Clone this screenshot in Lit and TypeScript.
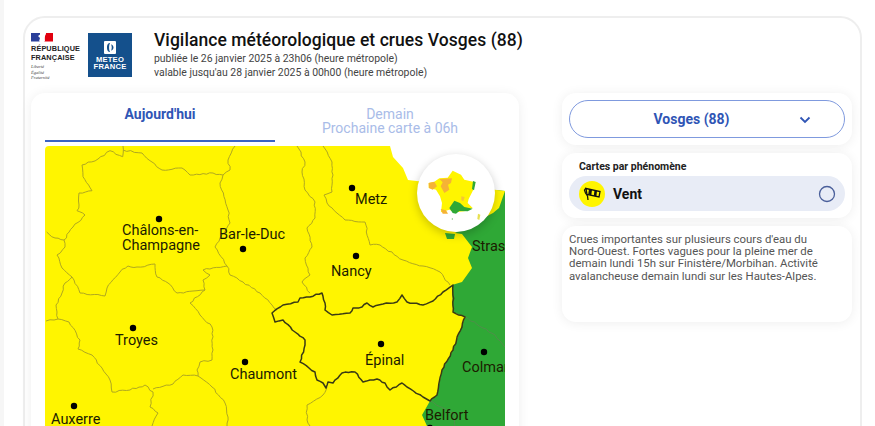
import { LitElement, html, css, svg } from "lit";
import { customElement } from "lit/decorators.js";

function jag(d: string, amp: number, seed: number) {
  let s = seed;
  const rnd = () => {
    s = (s * 1664525 + 1013904223) % 4294967296;
    return s / 4294967296 - 0.5;
  };
  const closed = /Z\s*$/.test(d);
  const pts = (d.match(/-?[\d.]+\s+-?[\d.]+/g) || []).map((p) => p.trim().split(/\s+/).map(Number));
  if (closed) pts.push(pts[0]);
  let out = `M${pts[0][0]} ${pts[0][1]}`;
  for (let i = 1; i < pts.length; i++) {
    const [x0, y0] = pts[i - 1];
    const [x1, y1] = pts[i];
    const len = Math.hypot(x1 - x0, y1 - y0);
    const n = Math.max(1, Math.round(len / 3.5));
    for (let k = 1; k <= n; k++) {
      const t = k / n;
      const off = k === n ? 0 : rnd() * amp * 2;
      const x = x0 + (x1 - x0) * t + (-(y1 - y0) / (len || 1)) * off;
      const y = y0 + (y1 - y0) * t + ((x1 - x0) / (len || 1)) * off;
      out += `L${x.toFixed(1)} ${y.toFixed(1)}`;
    }
  }
  return out + (closed ? "Z" : "");
}

const thin = [
  "M123 146L122.7 156.7L110 150.7L98 159L82 165L83 176.7L92 190.7L79 193L79 205L77 210.7L85 215L73 227L64 240L55 238L46.7 232",
  "M64 240L65 247L57 255L62 268L72 277L65 283L62 293L56 305L58 319L46 321",
  "M58 319L69 322L80 340L78 349L92 355L102 368L110 380L112 392L130 390L145 385L153 392L150 407L158 413L152 426",
  "M153 389L173 384L183 375L198 376L212 387L225 403L228 417L227 426",
  "M72 277L80 293L105 296L107 288L120 272L128 266L137 267L155 264L157 277L168 283L177 293L193 291L205 290L190 303L200 315L212 327L213 350L212 360L200 362L197 370L198 376",
  "M205 290L203 280L210 275L203 270L227 266L230 275L243 282L260 293L272 305L277 310",
  "M227 266L215 247L230 223L228 210L220 183L223 175L213 173L190 175L182 168L162 170L152 162L142 153L123 150",
  "M223 175L230 170L228 160L235 146",
  "M297 146L305 162L302 172L305 190L315 202L315 218L307 228L312 247L305 258L310 275L302 282L310 293",
  "M323 146L332 162L333 175L332 192L324 195L327 203L345 220L365 222L370 245L380 245L403 260L423 266L440 272L450 285",
  "M327 387L323 395L307 405L307 420L310 426",
];
const greenLines = ["M465 317L483 328L495 335L505 347", "M430 401L453 413L455 426"];
const vosges =
  "M272 313L283 305L298 302L300 298L310 297L322 293L325 303L325 310L332 315L350 313L353 308L362 307L367 303L373 307L383 304L397 302L402 295L407 302L423 305L433 301L443 292L453 285L453 312L465 317L453 350L442 370L437 395L430 401L423 397L407 387L402 383L390 390L385 383L377 379L363 382L355 372L342 373L333 383L328 382L326 388L323 383L317 380L315 372L300 362L305 345L305 340L295 332L283 320L275 322Z";
const yellow =
  "M49 146L390 146L393 157L403 168L408 180L425 182L497 190L505 191L499 208L493 213L470 225L455 233L462 234L472 247L468 258L472 268L462 282L452 285L453 312L465 317L453 350L442 370L437 395L430 401L422 415L427 426L45 426L45 150Q45 146 49 146Z";
const green = "M497 190L505 191L505 426L420 426L440 300L440 240Z";

const dots: [number, number][] = [
  [159, 219], [243, 249], [352, 188], [356, 256], [133, 328], [245, 362],
  [74, 406], [381, 344], [484, 352], [430, 428],
];
const labels: [string, number, number][] = [
  ["Châlons-en-", 122, 235], ["Champagne", 122, 250], ["Bar-le-Duc", 219, 239],
  ["Metz", 355, 204], ["Nancy", 331, 276], ["Troyes", 115, 345],
  ["Chaumont", 230, 379], ["Auxerre", 51, 424], ["Épinal", 365, 365],
  ["Colmar", 462, 372], ["Belfort", 425, 420], ["Strasbourg", 472, 251],
];

@customElement("app-root")
export class AppRoot extends LitElement {
  static styles = css`
    :host { display: block; width: 875px; height: 426px; overflow: hidden; box-sizing: border-box;
      background: #fff; border-left: 4px solid #f6f6f6; font-family: Roboto, sans-serif; padding: 16px 13px 0 19px; }
    .frame { height: 500px; box-sizing: border-box; border: 2px solid #eee; border-radius: 22px; padding: 15px 7px 0 6px; background: #fff; }
    header { display: flex; align-items: flex-start; height: 60px; }
    .rf { width: 57px; display: flex; flex-direction: column; }
    .flag { display: block; margin-bottom: 3px; }
    .rf b { font: 700 7.3px/8.6px "Liberation Sans", sans-serif; color: #222; letter-spacing: .12px; display: block; }
    .rf i { font: italic 4.500px/5.500px "Liberation Serif", serif; color: #444; display: block; margin-top: 2px; }
    .mf { width: 44px; height: 44px; background: #14508c; display: flex; flex-direction: column; align-items: center; color: #fff; font: 700 7.600px/6.500px "Liberation Sans", sans-serif; letter-spacing: .2px; text-align: center; }
    .mf svg { margin-top: 8px; margin-bottom: 3px; display: block; }
    .head { margin-left: 22px; margin-top: -5px; }
    h1 { margin: 0; font: 500 17.5px/24px Roboto, sans-serif; color: #111; letter-spacing: .06px; }
    .head p { margin: 0; font: 400 10.45px/14px Roboto, sans-serif; color: #444; }
    main { display: flex; gap: 43px; align-items: flex-start; }
    .panel { width: 488px; height: 400px; box-sizing: border-box; padding: 0 14px; background: #fff; border-radius: 14px; box-shadow: 0 1px 12px rgba(0,0,0,.07); }
    .tabs { display: grid; grid-template-columns: 230px 230px; height: 49px; margin-bottom: 4px; }
    .tab { text-align: center; font: 400 14px/14px Roboto, sans-serif; color: #a9bce8; padding-top: 14px; box-sizing: border-box; }
    .tab.on { font-weight: 700; color: #2f55b5; border-bottom: 2px solid #3a63c4; }
    .map { position: relative; width: 460px; height: 280px; }
    .map > svg { display: block; }
    .map text { font: 400 14.5px Roboto, sans-serif; fill: #1c1c00; }
    .mini { position: absolute; left: 372px; top: 8px; width: 78px; height: 78px; border-radius: 50%; background: #fff; box-shadow: 0 3px 10px rgba(0,0,0,.22); }
    .mini svg { display: block; }
    .side { width: 290px; display: flex; flex-direction: column; gap: 8px; }
    .card { background: #fff; border-radius: 14px; box-shadow: 0 1px 12px rgba(0,0,0,.07); box-sizing: border-box; }
    .c1 { height: 52px; padding: 7px 7px; }
    .pill { height: 38px; box-sizing: border-box; border: 1.5px solid #7f9ade; border-radius: 19px; position: relative; display: flex; align-items: center; justify-content: center; padding-right: 31px; font: 700 14px Roboto, sans-serif; color: #2f55b5; }
    .pill svg { position: absolute; right: 33px; top: 15px; }
    .c2 { height: 65px; padding: 7px 7px; }
    .c2 .lbl { font: 700 10.5px/13px Roboto, sans-serif; color: #222; padding-left: 10px; margin-bottom: 3px; }
    .row { height: 35px; background: #e8ecf6; border-radius: 18px; display: flex; align-items: center; padding: 0 9px 0 10px; font: 700 14px Roboto, sans-serif; color: #111; }
    .row .ic { margin-right: 8px; display: block; }
    .row .rd { margin-left: auto; display: block; }
    .c3 { height: 96px; padding: 7px 7px; font: 400 11.4px/12.2px Roboto, sans-serif; color: #555; }
  `;

  render() {
    return html`<div class="frame">
      <header>
        <div class="rf">
          <svg class="flag" width="22" height="9" viewBox="0 0 22 9"><rect width="9" height="8.500" fill="#2a3f9a"/><path d="M13 8.500L14 3L15 0H22V8.500Z" fill="#e1000f"/><path d="M8 8.500L9 5L7 3L11 0H15L13.500 4L14 8.500Z" fill="#fff"/></svg>
          <b>RÉPUBLIQUE</b><b>FRANÇAISE</b>
          <i>Liberté<br>Égalité<br>Fraternité</i>
        </div>
        <div class="mf">
          <svg width="12" height="13" viewBox="0 0 12 13"><rect width="12" height="13" rx="1" fill="#fff"/><path d="M6 2C3.500 2 3 4.500 3 6.500S3.500 11 6 11C4.800 9 4.800 4 6 2Z" fill="#14508c"/><path d="M7 3.500C8.500 3.500 9.500 5 9.500 6.500S8.500 9.500 7 9.500C8 8 8 5 7 3.500Z" fill="#14508c"/></svg>
          METEO<br>FRANCE
        </div>
        <div class="head">
          <h1>Vigilance météorologique et crues Vosges (88)</h1>
          <p>publiée le 26 janvier 2025 à 23h06 (heure métropole)</p>
          <p>valable jusqu'au 28 janvier 2025 à 00h00 (heure métropole)</p>
        </div>
      </header>
      <main>
        <section class="panel">
          <div class="tabs">
            <div class="tab on">Aujourd'hui</div>
            <div class="tab">Demain<br>Prochaine carte à 06h</div>
          </div>
          <div class="map">
            <svg width="460" height="280" viewBox="45 146 460 280">
              <path d="${green}" fill="#2fa836"/>
              <path d="${yellow}" fill="#fff500"/>
              <path d="M445 233L455 234L454 239L447 239Z" fill="#2fa836"/>
              ${thin.map((d, i) => svg`<path d="${jag(d, 0.9, 11 + i)}" fill="none" stroke="#b0a820" stroke-width="1"/>`)}
              ${greenLines.map((d, i) => svg`<path d="${jag(d, 0.8, 50 + i)}" fill="none" stroke="#4f8f4a" stroke-width="1"/>`)}
              <path d="${jag(vosges, 0.7, 77)}" fill="none" stroke="#3a3a14" stroke-width="1.5" stroke-linejoin="round"/>
              ${dots.map(([x, y]) => svg`<circle cx="${x}" cy="${y}" r="3.200" fill="#000"/>`)}
              ${labels.map(([t, x, y]) => svg`<text x="${x}" y="${y}">${t}</text>`)}
            </svg>
            <div class="mini">
              <svg width="78" height="78" viewBox="53 43 234 234">
                <path d="M160 93L185 105L195 120L228 128L222 150L208 178L205 190L220 205L195 215L165 218L150 210L125 218L128 190L122 170L110 150L88 145L88 130L105 126L120 116L145 114Z" fill="#fff500"/>
                <path d="M88 130L105 126L113 140L100 150L89 145Z" fill="#f5b335"/>
                <path d="M120 118L158 116L155 130L146 135L150 150L135 160L124 140L130 128Z" fill="#f5b335"/>
                <path d="M124 208L140 212L146 222L130 222Z" fill="#f5b335"/>
                <path d="M186 170L196 172L192 185L186 182Z" fill="#f5c535"/>
                <path d="M150 205L165 183L182 190L195 202L220 207L205 215L180 214L170 222L160 220Z" fill="#2fa836"/>
                <path d="M221 124L229 127L224 152L218 148Z" fill="#2fa836"/>
                <path d="M236 222L243 225L240 241L234 238Z" fill="#e8e050"/>
                <circle cx="159" cy="238" r="2" fill="#6fc070"/>
              </svg>
            </div>
          </div>
        </section>
        <aside class="side">
          <div class="card c1">
            <div class="pill">Vosges (88)
              <svg width="12" height="8" viewBox="0 0 12 8"><path d="M1.500 1.500L6 6L10.500 1.500" fill="none" stroke="#2f55b5" stroke-width="1.800"/></svg>
            </div>
          </div>
          <div class="card c2">
            <div class="lbl">Cartes par phénomène</div>
            <div class="row">
              <svg class="ic" width="26" height="26" viewBox="0 0 26 26">
                <circle cx="13" cy="13" r="13" fill="#fff500"/>
                <path d="M7 7.500L21 10.500L20 16L8 13.500Z" fill="none" stroke="#111" stroke-width="1.300"/>
                <path d="M10 8L13 8.800L12.300 14.200L9.200 13.500ZM15.500 9.300L18 9.900L17.400 15.200L14.800 14.700Z" fill="#111"/>
                <path d="M7 7L5.500 9L6.500 12L8.500 15L9 19" fill="none" stroke="#111" stroke-width="1.300"/>
              </svg>
              Vent
              <svg class="rd" width="18" height="18" viewBox="0 0 18 18"><circle cx="9" cy="9" r="7.500" fill="none" stroke="#4a5f9a" stroke-width="1.300"/></svg>
            </div>
          </div>
          <div class="card c3">Crues importantes sur plusieurs cours d'eau du<br>Nord-Ouest. Fortes vagues pour la pleine mer de<br>demain lundi 15h sur Finistère/Morbihan. Activité<br>avalancheuse demain lundi sur les Hautes-Alpes.</div>
        </aside>
      </main>
    </div>`;
  }
}
